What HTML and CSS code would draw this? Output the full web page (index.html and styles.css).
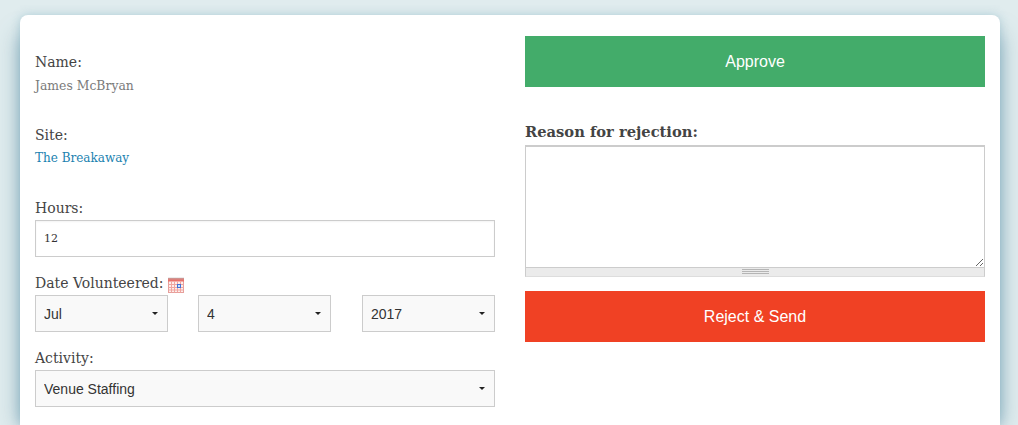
FILE: index.html
```html
<!DOCTYPE html>
<html lang="en">
<head>
  <meta charset="UTF-8">
  <meta name="viewport" content="width=device-width, initial-scale=1.0">
  <title>Review Hours</title>
  <link rel="stylesheet" href="styles.css">
</head>
<body>
  <div class="shade">
    <div class="card">
      <div class="col details">
        <div class="field info">
          <div class="label">Name:</div>
          <div class="value name">James McBryan</div>
        </div>
        <div class="field info">
          <div class="label">Site:</div>
          <a class="value site" href="#">The Breakaway</a>
        </div>
        <div class="field hours">
          <label class="label" for="hours">Hours:</label>
          <input id="hours" class="text-input" type="text" value="12">
        </div>
        <div class="field date">
          <div class="label">Date Volunteered:
            <svg class="cal" width="16" height="16" viewBox="0 0 16 16">
              <rect x="0.5" y="1.5" width="15" height="14" fill="#fdeeec" stroke="#e6a09c"/>
              <rect x="0" y="1" width="16" height="3.5" fill="#e9706a"/>
              <path d="M1 0.5v2M3 0.5v2M5 0.5v2M7 0.5v2M9 0.5v2M11 0.5v2M13 0.5v2M15 0.5v2" stroke="#b5b5b5" stroke-width="1"/>
              <path d="M0.5 7.5h15M0.5 10.5h15M0.5 13h15M3.5 4.5v11M6.5 4.5v11M9.5 4.5v11M12.5 4.5v11" stroke="#f0a5a0" stroke-width="1"/>
              <rect x="9.5" y="7.5" width="3" height="3" fill="#cfe0fa" stroke="#3f74d8"/>
            </svg>
          </div>
          <div class="date-row">
            <div class="select-box"><select><option>Jul</option></select></div>
            <div class="select-box"><select><option>4</option></select></div>
            <div class="select-box"><select><option>2017</option></select></div>
          </div>
        </div>
        <div class="field activity">
          <label class="label" for="activity">Activity:</label>
          <div class="select-box"><select id="activity"><option>Venue Staffing</option></select></div>
        </div>
      </div>
      <div class="col">
        <button class="btn approve">Approve</button>
        <label class="reason-label" for="reason">Reason for rejection:</label>
        <div class="editor">
          <textarea id="reason"></textarea>
          <div class="grip"></div>
        </div>
        <button class="btn reject">Reject &amp; Send</button>
      </div>
    </div>
  </div>
</body>
</html>
```

FILE: styles.css
```css
* {
  box-sizing: border-box;
  margin: 0;
  padding: 0;
}

html,
body {
  height: 425px;
  overflow: hidden;
}

body {
  background: #e0ecee;
  font-family: "DejaVu Serif", serif;
  color: #444;
}

.shade {
  margin: 35px 18px 0 20px;
  height: 390px;
  box-shadow: 0 0 20px rgba(70, 125, 150, 0.6);
}

.card {
  position: relative;
  top: -20px;
  height: 410px;
  display: grid;
  grid-template-columns: 460px 460px;
  column-gap: 30px;
  align-content: start;
  padding: 21px 15px 0;
  background: #fff;
  border-radius: 8px 8px 0 0;
  box-shadow: 0 0 10px rgba(120, 170, 190, 0.45);
}

.details {
  padding-top: 16px;
}

.label {
  display: block;
  font-size: 14px;
  line-height: 20px;
  color: #444;
}

.field.info {
  height: 73px;
}

.value {
  display: block;
  margin-top: 5px;
  font-size: 12px;
  line-height: 17px;
  color: #7a7a7a;
}

.name {
  font-size: 12.4px;
}

.site {
  color: #1a82b0;
  text-decoration: none;
}

.hours .label {
  margin-bottom: 2px;
}

.text-input {
  display: block;
  width: 100%;
  height: 37px;
  padding: 0 8px;
  border: 1px solid #ccc;
  box-shadow: inset 0 1px 2px rgba(0, 0, 0, 0.05);
  font-family: "DejaVu Serif", serif;
  font-size: 11px;
  color: #333;
  outline: none;
}

.date {
  margin-top: 16px;
}

.date .label {
  display: flex;
  align-items: center;
  gap: 4px;
  margin-bottom: 2px;
}

.cal {
  margin-top: 3px;
}

.date-row {
  display: grid;
  grid-template-columns: 163px 164px 133px;
}

.date-row .select-box {
  width: 133px;
}

.activity {
  margin-top: 16px;
}

.activity .label {
  margin-bottom: 2px;
}

.select-box {
  position: relative;
  height: 37px;
}

.select-box::after {
  content: "";
  position: absolute;
  right: 10px;
  top: 17px;
  border-top: 3px solid #222;
  border-left: 3px solid transparent;
  border-right: 3px solid transparent;
}

.select-box select {
  appearance: none;
  display: block;
  width: 100%;
  height: 100%;
  padding: 0 8px;
  border: 1px solid #ccc;
  border-radius: 0;
  background: #f9f9f9;
  font-family: "Liberation Sans", sans-serif;
  font-size: 14px;
  color: #333;
}

.btn {
  display: block;
  width: 100%;
  height: 51px;
  border: none;
  font-family: "Liberation Sans", sans-serif;
  font-size: 16px;
  color: #fff;
}

.approve {
  background: #43ac6a;
}

.reject {
  margin-top: 14px;
  background: #f04124;
}

.reason-label {
  display: block;
  margin-top: 35px;
  font-size: 14.7px;
  font-weight: bold;
  line-height: 20px;
  color: #444;
}

.editor {
  margin-top: 3px;
  height: 132px;
  display: flex;
  flex-direction: column;
  border: 1px solid #ccc;
  border-top-width: 2px;
  border-bottom-color: #ddd;
}

.editor textarea {
  flex: 1;
  display: block;
  width: 100%;
  border: none;
  border-bottom: 1px solid #ccc;
  outline: none;
  resize: both;
}

.grip {
  position: relative;
  height: 8px;
  background: #ebebeb;
}

.grip::after {
  content: "";
  position: absolute;
  left: 216px;
  top: 1px;
  width: 27px;
  height: 5px;
  background: repeating-linear-gradient(#b5b5b5 0 1px, transparent 1px 2px);
}
```
